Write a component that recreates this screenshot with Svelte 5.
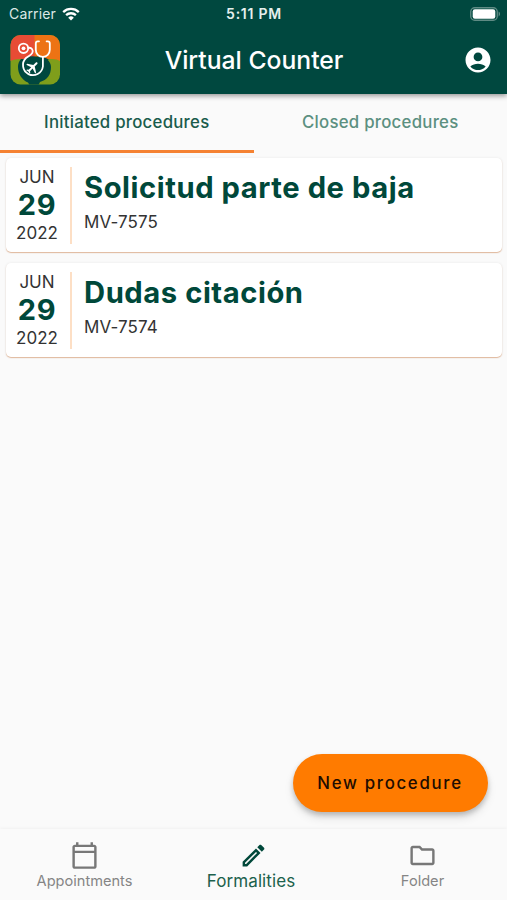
<script>
	let activeTab = $state('initiated');
	let activeSection = $state('formalities');

	const tabs = [
		{ id: 'initiated', label: 'Initiated procedures' },
		{ id: 'closed', label: 'Closed procedures' }
	];

	const procedures = [
		{ month: 'JUN', day: '29', year: '2022', title: 'Solicitud parte de baja', code: 'MV-7575' },
		{ month: 'JUN', day: '29', year: '2022', title: 'Dudas citación', code: 'MV-7574' }
	];

	const sections = [
		{
			id: 'appointments',
			label: 'Appointments',
			icon: 'M20 3h-1V1h-2v2H7V1H5v2H4c-1.1 0-2 .9-2 2v16c0 1.1.9 2 2 2h16c1.1 0 2-.9 2-2V5c0-1.1-.9-2-2-2zm0 18H4V10h16v11zm0-13H4V5h16v3z'
		},
		{
			id: 'formalities',
			label: 'Formalities',
			icon: 'M3 17.25V21h3.75L17.81 9.94l-3.75-3.75L3 17.25zM5.92 19H5v-.92l9.06-9.06.92.92L5.92 19zM20.71 5.63l-2.34-2.34c-.2-.2-.45-.29-.71-.29s-.51.1-.7.29l-1.83 1.83 3.75 3.75 1.83-1.83c.39-.39.39-1.02 0-1.41z'
		},
		{
			id: 'folder',
			label: 'Folder',
			icon: 'M9.17 6l2 2H20v10H4V6h5.17M10 4H4c-1.1 0-1.99.9-1.99 2L2 18c0 1.1.9 2 2 2h16c1.1 0 2-.9 2-2V8c0-1.1-.9-2-2-2h-8l-2-2z'
		}
	];
</script>

<div class="screen">
	<header>
		<div class="status-bar">
			<div class="carrier">
				<span>Carrier</span>
				<svg class="wifi" viewBox="0 0 18 14">
					<path d="M1.2 5.1a11.2 11.2 0 0 1 15.6 0M4.1 8.2a7.1 7.1 0 0 1 9.8 0" />
					<path class="dot" d="M6.2 10.7a4 4 0 0 1 5.6 0L9 13.6z" />
				</svg>
			</div>
			<span class="clock">5:11 PM</span>
			<svg class="battery" viewBox="0 0 31 14">
				<rect class="shell" x="0.75" y="0.75" width="26.5" height="12.5" rx="4" />
				<rect class="charge" x="2.7" y="2.2" width="22.6" height="9.6" rx="2.2" />
				<path class="tip" d="M28.6 4.6c1.9.8 1.9 4 0 4.8z" />
			</svg>
		</div>

		<div class="app-bar">
			<svg class="logo" viewBox="0 0 50 50">
				<defs>
					<clipPath id="logo-shape"><rect x="0.5" width="49.5" height="49.5" rx="10" /></clipPath>
				</defs>
				<g clip-path="url(#logo-shape)">
					<rect fill="#7f9e1b" width="50" height="50" />
					<path fill="#00483f" d="M11 24h26q4 4 4 8c0 8-4 13-11 15l-1.500 3H19.500L18 47.500C12 45 8 39 8 32q0-5 3-8z" />
					<path fill="#e74c35" d="M0 0h25v24H9q-4 0-9 2z" />
					<path fill="#ed7314" d="M24.500 0H50v26q-3-2-8-2H24.500z" />
					<path fill="#00483f" d="M13 25a15 15 0 0 1 12-3.500V25zM25 25v-3.500q10-.5 14 3.500z" />
				</g>
				<g class="tube">
					<circle cx="13.5" cy="13.3" r="4.7" />
					<path d="M18.300 12.800c3.700-.5 5.200 2.500 4 5-1.200 2.500-4 3.200-6.300 5.200a10 10 0 1 0 16.900 8.500V22" />
					<path d="M29 6.300h-1.200c-1.300 0-2 .8-2 2.300v6.200c0 4.100 3 7 7 7s7-2.900 7-7V8.600c0-1.500-.7-2.300-2-2.300h-1.200" />
				</g>
				<circle fill="#fff" cx="13.5" cy="13.3" r="1.9" />
				<path class="plane" transform="translate(22.6 32.2) rotate(45) scale(.66) translate(-11.5 -12)" d="M21 16v-2l-8-5V3.500c0-.83-.67-1.500-1.500-1.500S10 2.670 10 3.500V9l-8 5v2l8-2.500V19l-2 1.500V22l3.500-1 3.500 1v-1.500L13 19v-5.500l8 2.500z" />
			</svg>
			<h1>Virtual Counter</h1>
			<button class="account" aria-label="Account">
				<svg viewBox="0 0 24 24">
					<path d="M12 2C6.480 2 2 6.480 2 12s4.480 10 10 10 10-4.480 10-10S17.520 2 12 2zm0 4c1.930 0 3.500 1.570 3.500 3.500S13.930 13 12 13s-3.500-1.570-3.500-3.500S10.070 6 12 6zm0 14c-2.030 0-4.430-.82-6.140-2.880C7.550 15.800 9.680 15 12 15s4.450.8 6.140 2.120C16.430 19.180 14.030 20 12 20z" />
				</svg>
			</button>
		</div>
	</header>

	<div class="tabs">
		{#each tabs as tab}
			<button class="tab {tab.id}" class:active={activeTab === tab.id} onclick={() => (activeTab = tab.id)}>
				<span>{tab.label}</span>
			</button>
		{/each}
	</div>

	<main>
		{#each procedures as item}
			<article class="card">
				<div class="date">
					<span class="month">{item.month}</span>
					<span class="day">{item.day}</span>
					<span class="year">{item.year}</span>
				</div>
				<div class="details">
					<h2>{item.title}</h2>
					<p>{item.code}</p>
				</div>
			</article>
		{/each}
	</main>

	<div class="action">
		<button class="new-procedure">New procedure</button>
	</div>

	<nav>
		{#each sections as section}
			<button class="nav-item {section.id}" class:active={activeSection === section.id} onclick={() => (activeSection = section.id)}>
				<svg viewBox="0 0 24 24"><path d={section.icon} /></svg>
				<span>{section.label}</span>
			</button>
		{/each}
	</nav>
</div>

<style>
	:global(body) {
		margin: 0;
		background: #fafafa;
	}

	.screen {
		display: flex;
		flex-direction: column;
		height: 100vh;
		overflow: hidden;
		background: #fafafa;
		font-family: Inter, 'Liberation Sans', sans-serif;
	}

	button {
		padding: 0;
		border: none;
		background: none;
		font-family: inherit;
		cursor: pointer;
	}

	svg {
		display: block;
	}

	header {
		flex: none;
		height: 94px;
		background: #00483f;
		color: #fff;
		box-shadow: 0 2px 5px rgba(0, 0, 0, 0.4);
		z-index: 1;
	}

	.status-bar {
		display: grid;
		grid-template-columns: 1fr auto 1fr;
		align-items: center;
		height: 27px;
		padding: 0 6px 0 9px;
		box-sizing: border-box;
	}

	.carrier {
		display: flex;
		align-items: center;
		gap: 6px;
		font-size: 14px;
		letter-spacing: 0.15px;
		color: #dce8e6;
	}

	.wifi {
		width: 18px;
		height: 14px;
	}

	.wifi path {
		fill: none;
		stroke: #fff;
		stroke-width: 2.3;
	}

	.wifi .dot {
		fill: #fff;
		stroke: none;
	}

	.clock {
		margin-right: 2px;
		font-size: 14px;
		font-weight: 600;
		letter-spacing: 0.75px;
		color: #e5efed;
	}

	.battery {
		width: 31px;
		height: 14px;
		justify-self: end;
	}

	.shell {
		fill: none;
		stroke: #5f8b84;
		stroke-width: 1.3;
	}

	.charge {
		fill: #fff;
	}

	.tip {
		fill: #5f8b84;
	}

	.app-bar {
		display: grid;
		grid-template-columns: 50px 1fr 50px;
		align-items: center;
		height: 66px;
		padding: 0 4px 0 10px;
	}

	.logo {
		width: 50px;
		height: 50px;
	}

	.tube {
		fill: none;
		stroke: #fff;
		stroke-width: 1.8;
		stroke-linecap: round;
	}

	.plane {
		fill: #fff;
	}

	h1 {
		margin: 0;
		padding-right: 5px;
		font-size: 24.7px;
		font-weight: 500;
		line-height: 30px;
		text-align: center;
	}

	.account svg {
		width: 30px;
		height: 30px;
		margin: 0 auto;
		fill: #fff;
	}

	.tabs {
		display: grid;
		grid-template-columns: 1fr 1fr;
		flex: none;
		height: 59px;
	}

	.tab {
		border-bottom: 3px solid transparent;
		font-size: 16.8px;
		font-weight: 500;
		letter-spacing: 0.25px;
		color: #5c9080;
	}

	.tab.active {
		border-bottom-color: #f58232;
		color: #1a5c4c;
	}

	main {
		flex: 1;
		display: flex;
		flex-direction: column;
		gap: 11px;
		padding: 5px 5px 0 6px;
	}

	.card {
		display: flex;
		align-items: center;
		height: 94px;
		border-radius: 5px;
		background: #fff;
		box-shadow: 0 1px 1px rgba(205, 125, 70, 0.5), 0 0 3px rgba(0, 0, 0, 0.07);
	}

	.date {
		display: flex;
		flex-direction: column;
		align-items: center;
		justify-content: center;
		box-sizing: border-box;
		width: 66px;
		height: 77px;
		padding-right: 2px;
		border-right: 2px solid #fddfc5;
		color: #333;
		font-size: 17px;
		line-height: 24px;
	}

	.day {
		font-size: 29px;
		font-weight: 700;
		line-height: 32px;
		color: #00483a;
		letter-spacing: 0.7px;
	}

	.details {
		padding: 0 0 7px 12px;
	}

	h2 {
		margin: 0;
		font-size: 29.2px;
		font-weight: 700;
		line-height: 36px;
		letter-spacing: 0.55px;
		color: #00483a;
	}

	p {
		margin: 4px 0 0;
		font-size: 17px;
		line-height: 24px;
		letter-spacing: 0.1px;
		color: #333;
	}

	.action {
		display: flex;
		flex: none;
		justify-content: flex-end;
		padding: 0 19.5px 17px 0;
	}

	.new-procedure {
		width: 195px;
		height: 58.5px;
		border-radius: 30px;
		background: #ff7b00;
		box-shadow: 0 3px 5px rgba(0, 0, 0, 0.2), 0 6px 10px rgba(0, 0, 0, 0.1);
		color: #210c00;
		font-size: 16.8px;
		font-weight: 500;
		letter-spacing: 1.7px;
	}

	nav {
		display: grid;
		grid-template-columns: repeat(3, 1fr);
		flex: none;
		height: 71px;
		background: #fafafa;
		box-shadow: 0 -1px 3px rgba(0, 0, 0, 0.04);
	}

	.nav-item {
		display: flex;
		flex-direction: column;
		align-items: center;
		padding-top: 12px;
		font-size: 14.6px;
		line-height: 23px;
		color: #858585;
	}

	.nav-item svg {
		width: 29px;
		height: 29px;
		fill: #777;
	}

	.nav-item.active {
		font-size: 17px;
		line-height: 22px;
		letter-spacing: 0.1px;
		color: #1c614c;
	}

	.nav-item.active span {
		margin-right: 5px;
	}

	.nav-item.active svg {
		fill: #00483a;
	}
</style>
